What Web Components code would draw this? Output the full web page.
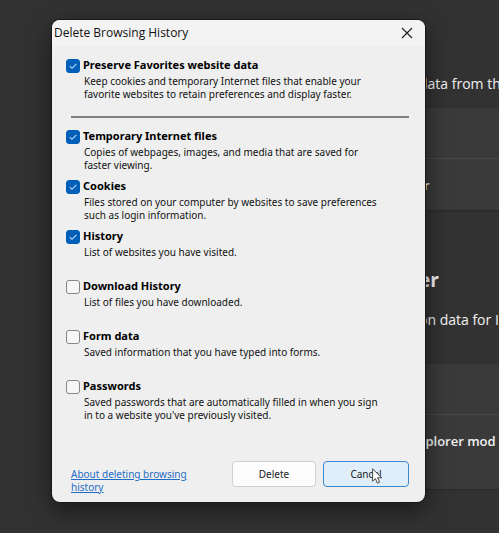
<!DOCTYPE html>
<html lang="en">
<head>
<meta charset="utf-8">
<title>Delete Browsing History</title>
<style>
  html { background: #323232; }
  body { margin: 0; min-height: 100vh; overflow: hidden; font-family: "Noto Sans", "Open Sans", sans-serif; }
</style>
</head>
<body>
<desktop-scene>
  <settings-page slot="behind">
    <settings-note>data from th</settings-note>
    <settings-card>
      <settings-row></settings-row>
      <settings-row>rer</settings-row>
    </settings-card>
    <settings-heading>er</settings-heading>
    <settings-note>on data for I</settings-note>
    <settings-card>
      <settings-row></settings-row>
      <settings-row tall>Explorer mod</settings-row>
    </settings-card>
  </settings-page>
  <history-dialog heading="Delete Browsing History">
    <history-option label="Preserve Favorites website data" checked>Keep cookies and temporary Internet files that enable your<br>favorite websites to retain preferences and display faster.</history-option>
    <dialog-rule></dialog-rule>
    <history-option label="Temporary Internet files" checked>Copies of webpages, images, and media that are saved for<br>faster viewing.</history-option>
    <history-option label="Cookies" checked>Files stored on your computer by websites to save preferences<br>such as login information.</history-option>
    <history-option label="History" checked>List of websites you have visited.</history-option>
    <history-option label="Download History">List of files you have downloaded.</history-option>
    <history-option label="Form data">Saved information that you have typed into forms.</history-option>
    <history-option label="Passwords">Saved passwords that are automatically filled in when you sign<br>in to a website you've previously visited.</history-option>
    <help-link slot="footer">About deleting browsing<br>history</help-link>
    <dialog-button slot="footer">Delete</dialog-button>
    <dialog-button slot="footer" hot>Cancel</dialog-button>
  </history-dialog>
</desktop-scene>
<script>
const define = (name, html, setup) => {
  const template = document.createElement("template");
  template.innerHTML = html;
  customElements.define(name, class extends HTMLElement {
    constructor() {
      super();
      this.attachShadow({ mode: "open" }).append(template.content.cloneNode(true));
    }
    connectedCallback() { if (setup) setup(this, this.shadowRoot); }
  });
};

define("desktop-scene", `
  <style>
    :host { display: grid; grid-template-columns: 52px minmax(0, 1fr) 74px; grid-template-rows: 20px auto 1fr; min-height: 100vh; }
    slot[name="behind"]::slotted(*) { grid-column: 1 / -1; grid-row: 1 / -1; }
    ::slotted(history-dialog) { grid-column: 2; grid-row: 2; z-index: 1; }
  </style>
  <slot name="behind"></slot><slot></slot>`);

define("settings-page", `
  <style>
    :host { display: flex; flex-direction: column; overflow: hidden; box-sizing: border-box; padding: 72px 0 0 calc(100% - 80px);
      color: #f2f2f2; font-family: "Open Sans", "Noto Sans", sans-serif; background: #323232; }
  </style>
  <slot></slot>`);

define("settings-note", `
  <style>:host { display: block; font-size: 14px; line-height: 24px; margin-bottom: 12px; white-space: nowrap; }
  :host(:nth-of-type(2)) { margin-bottom: 32px; }</style>
  <slot></slot>`);

define("settings-heading", `
  <style>:host { display: block; font-size: 19px; line-height: 28px; font-weight: 700; margin: 56px 0 14px; }</style>
  <slot></slot>`);

define("settings-card", `
  <style>:host { display: block; margin-left: -8px; background: #3a3a3a; box-shadow: 0 1px 1px #2a2a2a; }</style>
  <slot></slot>`);

define("settings-row", `
  <style>
    :host { display: flex; align-items: center; box-sizing: border-box; height: 51px; font-size: 13px; font-weight: 600; white-space: nowrap; }
    :host(:first-child) { border-bottom: 1px solid #484848; }
    :host([tall]) { height: 74px; padding-bottom: 22px; }
  </style>
  <slot></slot>`);

define("history-dialog", `
  <style>
    :host { display: flex; flex-direction: column; border-radius: 8px; background: #efefef; overflow: hidden;
      color: #111; font-size: 10px; line-height: 13px; box-shadow: 0 0 0 1px #181818, 0 8px 24px #0008; }
    header { display: flex; align-items: center; justify-content: space-between; height: 26px; padding-left: 2px; padding-right: 6px; background: #f3f3f3; }
    h1 { margin: 0; font: 400 12px/20px "Open Sans", "Noto Sans", sans-serif; }
    .close { display: grid; place-items: center; width: 24px; height: 24px; padding: 0; border: 0; background: none; color: #222; }
    main { padding: 13px 16px 0 14px; }
    footer { display: flex; align-items: flex-start; gap: 7px; padding: 31px 16px 8px 19px; }
  </style>
  <header>
    <h1></h1>
    <button class="close" aria-label="Close"><svg width="12" height="12" viewBox="0 0 12 12" fill="none" stroke="currentColor" stroke-width="1.2"><path d="M1 1l10 10M11 1L1 11"/></svg></button>
  </header>
  <main><slot></slot></main>
  <footer><slot name="footer"></slot></footer>`,
  (el, root) => { root.querySelector("h1").textContent = el.getAttribute("heading"); });

define("dialog-rule", `
  <style>:host { display: block; height: 2px; margin: 7px 0 12px 5px; background: #808080; }</style>`);

define("history-option", `
  <style>
    :host { display: block; min-height: 50px; }
    label { display: flex; align-items: flex-start; gap: 3px; height: 14px; margin-bottom: 2px; color: #000; font-size: 11px; line-height: 12px; font-weight: 700; }
    .box { display: grid; width: 14px; height: 14px; }
    input { appearance: none; grid-area: 1 / 1; box-sizing: border-box; width: 14px; height: 14px; margin: 0; border: 1px solid #858585; border-radius: 3px; background: #f6f6f6; }
    input:checked { background: #005fb8; border-color: #005fb8; }
    svg { grid-area: 1 / 1; visibility: hidden; pointer-events: none; }
    input:checked + svg { visibility: visible; }
    p { margin: 0 0 0 18px; }
  </style>
  <label><span class="box"><input type="checkbox"><svg width="14" height="14" viewBox="0 0 14 14" fill="none" stroke="#c4e0f8" stroke-width="1.1"><path d="M3.8 7.2l2.2 2.1 4.4-4.4"/></svg></span><span class="name"></span></label>
  <p><slot></slot></p>`,
  (el, root) => {
    root.querySelector(".name").textContent = el.getAttribute("label");
    root.querySelector("input").checked = el.hasAttribute("checked");
  });

define("help-link", `
  <style>
    :host { display: block; flex: 1; padding-top: 7px; }
    a { color: #1f6cc5; text-decoration: underline; }
  </style>
  <a href="#about"><slot></slot></a>`);

define("dialog-button", `
  <style>
    :host { display: block; position: relative; }
    button { display: block; width: 84px; height: 26px; padding: 0; border: 1px solid #d0d0d0; border-radius: 4px; background: #fdfdfd; color: #1a1a1a; font: inherit; }
    :host([hot]) button { width: 86px; border-color: #3b8ad0; background: #e0eef9; }
    svg { display: none; position: absolute; left: 49px; top: 7px; }
    :host([hot]) svg { display: block; }
  </style>
  <button><slot></slot></button>
  <svg width="11" height="16" viewBox="0 0 11 16"><path d="M.6.8v12.4l2.8-2.6 2 4.6 2.2-1-2-4.4h4z" fill="#fff" stroke="#333" stroke-width=".9" stroke-linejoin="round"/></svg>`);
</script>
</body>
</html>
